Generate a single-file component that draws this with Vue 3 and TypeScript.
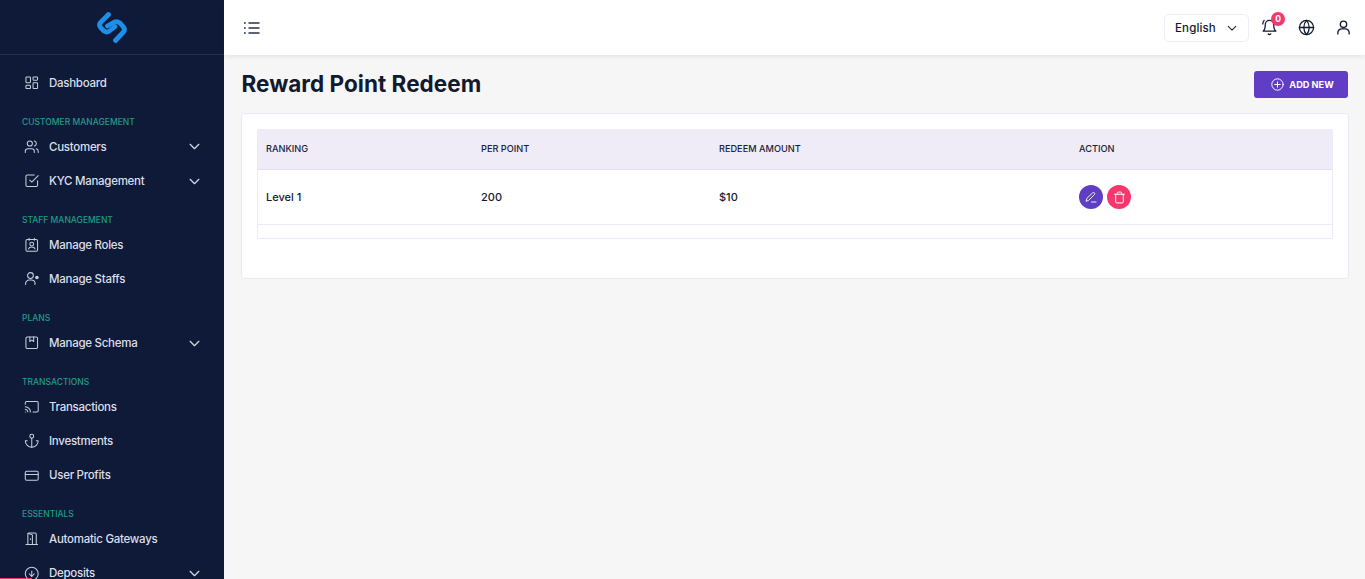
<script setup lang="ts">
interface NavItem { kind: 'item'; label: string; icon: string; chevron?: boolean }
interface NavLabel { kind: 'label'; label: string }
type Row = NavItem | NavLabel

const icons: Record<string, string> = {
  dashboard: '<rect x="3" y="3" width="7" height="9" rx="1"/><rect x="14" y="3" width="7" height="5" rx="1"/><rect x="14" y="12" width="7" height="9" rx="1"/><rect x="3" y="16" width="7" height="5" rx="1"/>',
  users: '<circle cx="9" cy="7" r="4"/><path d="M2 21v-2a4 4 0 0 1 4-4h6a4 4 0 0 1 4 4v2"/><path d="M16 3.1a4 4 0 0 1 0 7.8"/><path d="M22 21v-2a4 4 0 0 0-3-3.9"/>',
  check: '<path d="M9 11l3 3L22 4"/><path d="M21 12v7a2 2 0 0 1-2 2H5a2 2 0 0 1-2-2V5a2 2 0 0 1 2-2h11"/>',
  roles: '<rect x="3" y="4" width="18" height="18" rx="2"/><path d="M8 2v3M16 2v3"/><circle cx="12" cy="11" r="3"/><path d="M7 18.5c.5-2 2.500-3 5-3s4.500 1 5 3"/>',
  staff: '<circle cx="10" cy="7" r="4.500"/><path d="M2.500 21v-1.500A5.500 5.500 0 0 1 8 14h4a5.500 5.500 0 0 1 5 3.200v3.800"/><circle cx="20" cy="10" r="2" fill="currentColor"/>',
  schema: '<rect x="3" y="3" width="18" height="18" rx="2"/><path d="M9 3v7l3-2 3 2V3"/>',
  cast: '<path d="M2 8V6a2 2 0 0 1 2-2h16a2 2 0 0 1 2 2v12a2 2 0 0 1-2 2h-6"/><path d="M2 12a9 9 0 0 1 8 8"/><path d="M2 16a5 5 0 0 1 4 4"/><path d="M2 20h.01"/>',
  anchor: '<circle cx="12" cy="5" r="3"/><path d="M12 22V8"/><path d="M5 12H2a10 10 0 0 0 20 0h-3"/>',
  card: '<rect x="2" y="5" width="20" height="14" rx="2"/><path d="M2 10h20"/>',
  door: '<path d="M3 21h18"/><path d="M6 21V5a2 2 0 0 1 2-2h9a2 2 0 0 1 2 2v16"/><path d="M6 3.500l7 2.500v15"/><path d="M10 12v1"/>',
  deposit: '<circle cx="12" cy="12" r="10"/><path d="M12 8v8"/><path d="M8 12l4 4 4-4"/>',
}

const rows: Row[] = [
  { kind: 'item', label: 'Dashboard', icon: 'dashboard' },
  { kind: 'label', label: 'CUSTOMER MANAGEMENT' },
  { kind: 'item', label: 'Customers', icon: 'users', chevron: true },
  { kind: 'item', label: 'KYC Management', icon: 'check', chevron: true },
  { kind: 'label', label: 'STAFF MANAGEMENT' },
  { kind: 'item', label: 'Manage Roles', icon: 'roles' },
  { kind: 'item', label: 'Manage Staffs', icon: 'staff' },
  { kind: 'label', label: 'PLANS' },
  { kind: 'item', label: 'Manage Schema', icon: 'schema', chevron: true },
  { kind: 'label', label: 'TRANSACTIONS' },
  { kind: 'item', label: 'Transactions', icon: 'cast' },
  { kind: 'item', label: 'Investments', icon: 'anchor' },
  { kind: 'item', label: 'User Profits', icon: 'card' },
  { kind: 'label', label: 'ESSENTIALS' },
  { kind: 'item', label: 'Automatic Gateways', icon: 'door' },
  { kind: 'item', label: 'Deposits', icon: 'deposit', chevron: true },
]
</script>

<template>
  <div class="app">
    <aside class="sidebar">
      <div class="brand">
        <svg width="32" height="33" viewBox="0 0 32 33" fill="none" stroke="#1d8fe8" stroke-width="4.800" stroke-linecap="round" stroke-linejoin="round">
          <path d="M12.500 3.500 L5 11 Q2.200 14 5 17 L8 20 Q11 22 13.500 20 L19 15.500" />
          <path d="M19.500 29.500 L27 21.500 Q29.800 18.500 27 15.500 L24 12 Q21 9.800 18.500 11 L11.500 15" />
        </svg>
      </div>
      <nav class="nav">
        <template v-for="row in rows" :key="row.label">
          <div v-if="row.kind === 'label'" class="section">{{ row.label }}</div>
          <a v-else class="item">
            <svg class="ico" viewBox="0 0 24 24" fill="none" stroke="currentColor" stroke-width="1.600" stroke-linecap="round" stroke-linejoin="round" v-html="icons[row.icon]"></svg>
            <span class="item-label">{{ row.label }}</span>
            <svg v-if="row.chevron" class="chev" viewBox="0 0 12 12" fill="none" stroke="currentColor" stroke-width="1.200" stroke-linecap="round" stroke-linejoin="round"><path d="M2 4l4 4 4-4" /></svg>
          </a>
        </template>
      </nav>
      <div class="progress"></div>
    </aside>

    <div class="content">
      <header class="topbar">
        <svg class="burger" viewBox="0 0 16 12" width="16" height="12" fill="none" stroke="#2a3047" stroke-width="1.400">
          <path d="M4.500 1h11M4.500 6h11M4.500 11h11" />
          <path d="M0 1h1.700M0 6h1.700M0 11h1.700" />
        </svg>
        <div class="tools">
          <div class="lang">
            <span>English</span>
            <svg viewBox="0 0 12 12" width="10" height="10" fill="none" stroke="#1a2238" stroke-width="1.300" stroke-linecap="round" stroke-linejoin="round"><path d="M1.500 4l4.500 4.500L10.500 4" /></svg>
          </div>
          <div class="bell">
            <svg viewBox="0 0 24 24" width="17" height="17" fill="none" stroke="#111a2e" stroke-width="1.800" stroke-linecap="round" stroke-linejoin="round">
              <path d="M6 8a6 6 0 0 1 12 0c0 7 3 9 3 9H3s3-2 3-9" />
              <path d="M10.300 21a1.900 1.900 0 0 0 3.400 0" />
              <path d="M2.500 7c0-2 .8-3.600 2-5" />
              <path d="M21.500 7c0-2-.8-3.600-2-5" />
            </svg>
            <span class="badge">0</span>
          </div>
          <svg class="globe" viewBox="0 0 24 24" width="17" height="17" fill="none" stroke="#111a2e" stroke-width="1.800" stroke-linecap="round" stroke-linejoin="round">
            <circle cx="12" cy="12" r="10" />
            <path d="M2 12h20" />
            <path d="M12 2a15 15 0 0 1 0 20a15 15 0 0 1 0-20z" />
          </svg>
          <svg class="user" viewBox="0 0 24 24" width="17" height="17" fill="none" stroke="#111a2e" stroke-width="1.900" stroke-linecap="round" stroke-linejoin="round">
            <circle cx="12" cy="7.500" r="4.500" />
            <path d="M4 21v-1.500A5.500 5.500 0 0 1 9.500 14h5a5.500 5.500 0 0 1 5.500 5.500V21" />
          </svg>
        </div>
      </header>

      <main class="main">
        <div class="page-head">
          <h1>Reward Point Redeem</h1>
          <button class="add" type="button">
            <svg viewBox="0 0 24 24" width="13" height="13" fill="none" stroke="#fff" stroke-width="1.800" stroke-linecap="round"><circle cx="12" cy="12" r="10.500" /><path d="M12 7v10M7 12h10" /></svg>
            ADD NEW
          </button>
        </div>

        <section class="card">
          <div class="table-wrap">
            <table>
              <colgroup>
                <col class="c1" /><col class="c2" /><col class="c3" /><col />
              </colgroup>
              <thead>
                <tr><th>RANKING</th><th>PER POINT</th><th>REDEEM AMOUNT</th><th>ACTION</th></tr>
              </thead>
              <tbody>
                <tr>
                  <td>Level 1</td>
                  <td>200</td>
                  <td>$10</td>
                  <td>
                    <div class="actions">
                      <span class="round edit">
                        <svg viewBox="0 0 24 24" width="12" height="12" fill="none" stroke="#fff" stroke-width="1.800" stroke-linecap="round" stroke-linejoin="round"><path d="M15.500 3.500a2.500 2.500 0 0 1 3.500 3.500L7 19l-5 1.500L3.500 15.500z" /><path d="M13 22h9" /></svg>
                      </span>
                      <span class="round del">
                        <svg viewBox="0 0 24 24" width="13" height="13" fill="none" stroke="#fff" stroke-width="1.800" stroke-linecap="round" stroke-linejoin="round"><path d="M3 6h18" /><path d="M19 6v14a2 2 0 0 1-2 2H7a2 2 0 0 1-2-2V6" /><path d="M8 6V4a2 2 0 0 1 2-2h4a2 2 0 0 1 2 2v2" /></svg>
                      </span>
                    </div>
                  </td>
                </tr>
              </tbody>
            </table>
          </div>
        </section>
      </main>
    </div>
  </div>
</template>

<style>
html, body { margin: 0; height: 100%; overflow: hidden; background: #f6f6f7; }
</style>

<style scoped>
.app { display: flex; height: 579px; overflow: hidden; font-family: Inter, "Noto Sans", sans-serif; color: #111a2e; }

.sidebar { position: relative; width: 224px; flex: none; background: #0f1a38; overflow: hidden; }
.brand { height: 54px; display: flex; align-items: center; justify-content: center; border-bottom: 1px solid #252f4d; }
.nav { padding-top: 11px; padding-left: 22px; padding-right: 22px; }
.section { height: 14px; line-height: 14px; margin-top: 14.700px; margin-bottom: 1px; font-size: 8.500px; font-weight: 500; color: #1f9c86; white-space: nowrap; }
.item { display: flex; align-items: center; height: 34.200px; color: #dbdfea; font-size: 11.500px; font-weight: 500; letter-spacing: -.27px; padding-left: 1.500px; }
.ico { width: 15.500px; height: 15.500px; flex: none; margin-right: 10px; color: #c9cedb; }
.item-label { flex: 1; white-space: nowrap; }
.chev { width: 13px; height: 13px; color: #cfd4e0; flex: none; margin-right: 1px; }
.progress { position: absolute; left: 0; bottom: 0; width: 32px; height: 1px; background: #f3395f; }

.content { flex: 1; min-width: 0; display: flex; flex-direction: column; }
.topbar { position: relative; z-index: 1; height: 55px; flex: none; background: #fff; box-shadow: 0 1px 5px rgba(40, 40, 80, .1); display: flex; align-items: center; justify-content: space-between; padding: 0 13px 0 20px; }
.tools { display: flex; align-items: center; }
.lang { box-sizing: border-box; width: 85px; height: 28px; display: flex; align-items: center; justify-content: space-between; padding: 0 11px 0 10px; border: 1px solid #efeff8; border-radius: 5px; font-size: 11.500px; font-weight: 500; letter-spacing: .15px; }
.bell { position: relative; display: flex; margin-left: 12px; }
.badge { position: absolute; top: -7px; right: -7px; width: 14px; height: 14px; border-radius: 50%; background: #f4386e; color: #fff; font-size: 8.500px; font-weight: 700; line-height: 14px; text-align: center; }
.globe { margin-left: 20px; }
.user { margin-left: 20px; }

.main { flex: 1; padding: 16px 16px 0 17px; background: #f6f6f7; }
.page-head { display: flex; align-items: center; justify-content: space-between; height: 27px; margin-bottom: 15px; }
h1 { margin: 0 0 1px .5px; font-size: 22.500px; line-height: 26px; font-weight: 700; color: #111a2e; letter-spacing: .03px; }
.add { box-sizing: border-box; width: 94px; height: 27px; border: 0; border-radius: 3px; background: #5f3dc4; color: #fff; display: flex; align-items: center; justify-content: center; gap: 5px; font: 700 9.200px Inter, sans-serif; padding: 0 0 0 3px; margin-right: 1px; }

.card { box-sizing: border-box; height: 166px; background: #fff; border: 1px solid #e8e8f2; border-radius: 4px; padding: 15px; }
.table-wrap { border: 1px solid #ecebf5; border-top: 0; border-radius: 2px; height: 110px; box-sizing: border-box; }
table { width: 100%; border-collapse: collapse; table-layout: fixed; }
.c1 { width: 215px; }
.c2 { width: 238px; }
.c3 { width: 360px; }
th { height: 39px; padding: 0 8px 1px; background: #efecf8; border-bottom: 1px solid #e2dff2; text-align: left; font-size: 9.200px; font-weight: 500; color: #1a2238; }
td { height: 54px; padding: 0 8px; border-bottom: 1px solid #ecebf5; font-size: 11px; font-weight: 500; color: #111a2e; }
.actions { display: flex; gap: 4px; }
.round { width: 24px; height: 24px; border-radius: 50%; display: flex; align-items: center; justify-content: center; }
.edit { background: #5f3dc4; }
.del { background: #f4386e; }
</style>
